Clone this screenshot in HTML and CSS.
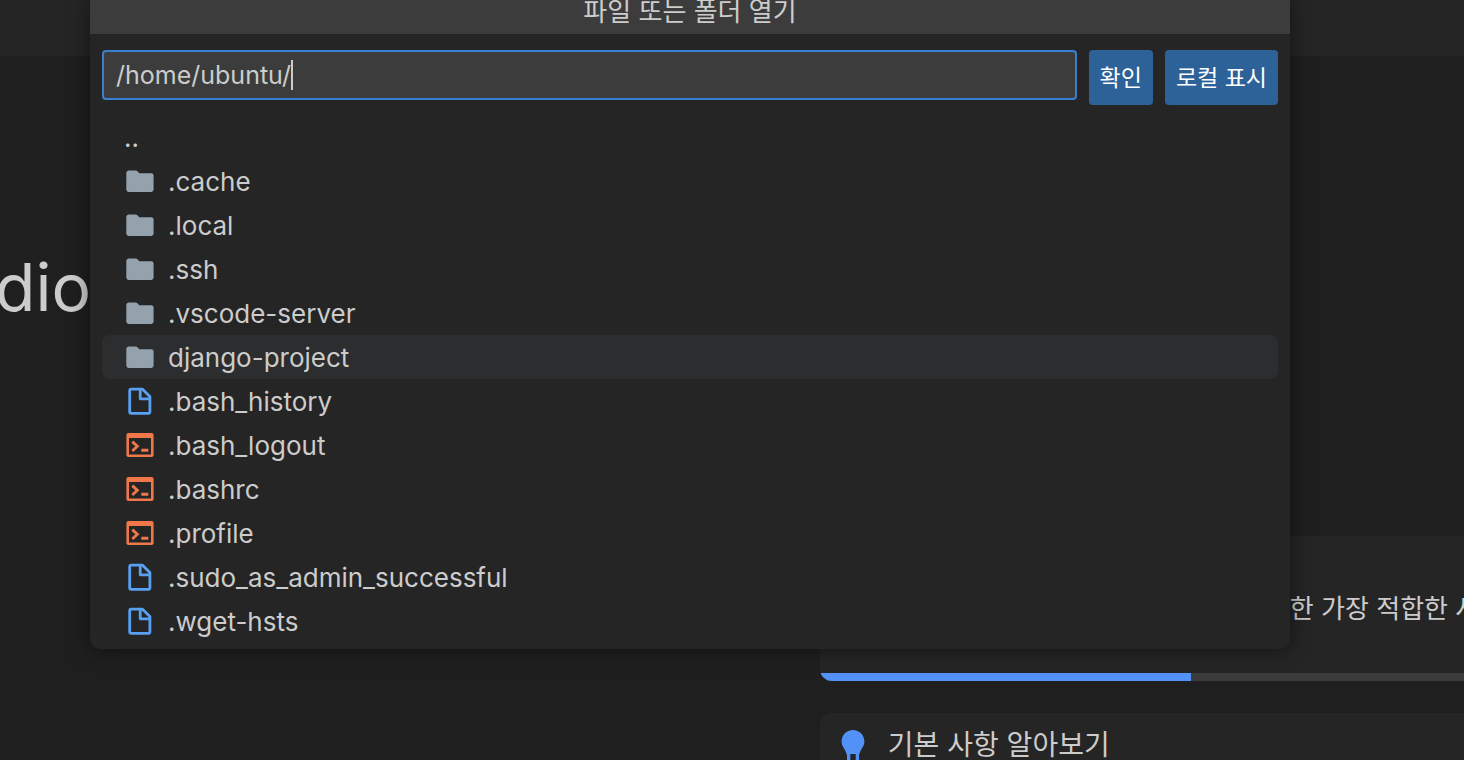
FILE: index.html
```
<!DOCTYPE html>
<html lang="ko">
<head>
    <meta charset="UTF-8">
    <meta name="viewport" content="width=device-width, initial-scale=1.0">
    <title>파일 또는 폴더 열기</title>
    <link rel="stylesheet" href="styles.css">
</head>
<body>
    <!-- Shared icons -->
    <svg class="icon-defs" width="0" height="0" aria-hidden="true">
        <symbol id="icon-folder" viewBox="0 0 32 32">
            <path fill="#94a2ae" d="M4.600 5.500h7.200c.7 0 1.200.2 1.600.7l1.900 2H27.200A2.400 2.400 0 0 1 29.600 10.600v14A2.400 2.400 0 0 1 27.200 27H4.700a2.400 2.400 0 0 1-2.400-2.400V7.900a2.400 2.400 0 0 1 2.300-2.400z"/>
        </symbol>
        <symbol id="icon-file" viewBox="0 0 32 32">
            <path fill="none" stroke="#58a1f2" stroke-width="2.800" stroke-linejoin="round" d="M7.200 4.200h11.300l7.400 7.400v15.200a1.500 1.500 0 0 1-1.500 1.500H7.200a1.500 1.500 0 0 1-1.500-1.500V5.700a1.500 1.500 0 0 1 1.500-1.500zM16.200 4.200v9.600h9.700"/>
        </symbol>
        <symbol id="icon-shell" viewBox="0 0 32 32">
            <path fill="#f0774a" fill-rule="evenodd" d="M4.400 4h23.200a2 2 0 0 1 2 2v20a2 2 0 0 1-2 2H4.400a2 2 0 0 1-2-2V6a2 2 0 0 1 2-2zM5 9v16.500h22V9z"/>
            <path fill="none" stroke="#f0774a" stroke-width="2.900" d="M8.300 12.600l5 4.700-5 4.700M17.300 21.300h7"/>
        </symbol>
    </svg>

    <div class="tab-bar"></div>
    <main class="welcome">
        <h1 class="product">dio</h1>
        <section class="walkthroughs">
            <div class="card card-setup">
                <p class="card-text">한 가장 적합한 사</p>
                <div class="progress"><div class="progress-done"></div></div>
            </div>
            <div class="card card-basics">
                <svg class="bulb" viewBox="0 0 26 40" aria-hidden="true">
                    <path fill="#5292f7" fill-rule="evenodd" d="M13 1C6.600 1 1.600 6 1.600 12.500c0 5.500 4.400 8 5.400 14V36h12v-9.500c1-6 5.400-8.500 5.400-14C24.400 6 19.400 1 13 1zM10.300 25h5.400v9h-5.400z"/>
                </svg>
                <h2 class="card-title">기본 사항 알아보기</h2>
            </div>
        </section>
    </main>

    <div class="quick-input" role="dialog" aria-labelledby="dialog-title">
        <h2 class="dialog-title" id="dialog-title">파일 또는 폴더 열기</h2>
        <form class="path-form" id="path-form">
            <div class="path-box">
                <input class="path-input" type="text" id="path" name="path" value="/home/ubuntu/" aria-label="경로" autocomplete="off" spellcheck="false">
                <span class="caret"></span>
            </div>
            <button class="btn" type="submit">확인</button>
            <button class="btn" type="button">로컬 표시</button>
        </form>
        <ul class="file-list">
            <li class="file"><span>..</span></li>
            <li class="file"><svg class="icon"><use href="#icon-folder"/></svg><span>.cache</span></li>
            <li class="file"><svg class="icon"><use href="#icon-folder"/></svg><span>.local</span></li>
            <li class="file"><svg class="icon"><use href="#icon-folder"/></svg><span>.ssh</span></li>
            <li class="file"><svg class="icon"><use href="#icon-folder"/></svg><span>.vscode-server</span></li>
            <li class="file hovered"><svg class="icon"><use href="#icon-folder"/></svg><span>django-project</span></li>
            <li class="file"><svg class="icon"><use href="#icon-file"/></svg><span>.bash_history</span></li>
            <li class="file"><svg class="icon"><use href="#icon-shell"/></svg><span>.bash_logout</span></li>
            <li class="file"><svg class="icon"><use href="#icon-shell"/></svg><span>.bashrc</span></li>
            <li class="file"><svg class="icon"><use href="#icon-shell"/></svg><span>.profile</span></li>
            <li class="file"><svg class="icon"><use href="#icon-file"/></svg><span>.sudo_as_admin_successful</span></li>
            <li class="file"><svg class="icon"><use href="#icon-file"/></svg><span>.wget-hsts</span></li>
        </ul>
    </div>

    <script>
        document.getElementById('path-form').addEventListener('submit', function(e) {
            e.preventDefault();
        });
    </script>
</body>
</html>
```
FILE: styles.css
```
* {
    box-sizing: border-box;
}
body {
    margin: 0;
    height: 100vh;
    overflow: hidden;
    display: flex;
    flex-direction: column;
    background: #1f1f1f;
    color: #cccccc;
    font-family: Inter, "Noto Sans CJK KR", sans-serif;
    font-size: 26px;
}
h1, h2, p, ul {
    margin: 0;
    padding: 0;
    font-weight: 400;
}
.icon-defs {
    position: absolute;
}

/* Welcome page */
.tab-bar {
    flex: none;
    height: 56px;
    background: #252525;
}
.welcome {
    flex: 1;
    min-height: 0;
    overflow: hidden;
    display: grid;
    grid-template-columns: 56% 1fr;
}
.product {
    margin-left: -5px;
    padding-top: 187px;
    font-size: 66px;
    line-height: 88px;
}
.walkthroughs {
    display: flex;
    flex-direction: column;
    gap: 32px;
    padding-top: 480px;
}
.card {
    flex: none;
    overflow: hidden;
    background: #252525;
    white-space: nowrap;
}
.card-setup {
    border-bottom-left-radius: 12px;
}
.card-text {
    padding: 57px 0 48px 470px;
    line-height: 32px;
}
.progress {
    height: 8px;
    background: #3c3c3c;
}
.progress-done {
    width: 371px;
    height: 8px;
    background: #5292f7;
}
.card-basics {
    display: flex;
    gap: 22px;
    padding: 16px 20px;
    border-top-left-radius: 12px;
}
.bulb {
    width: 26px;
    height: 40px;
}
.card-title {
    font-size: 28px;
    line-height: 32px;
}

/* File picker */
.quick-input {
    position: absolute;
    top: 0;
    left: 90px;
    right: 174px;
    background: #252525;
    border-radius: 0 0 10px 10px;
    box-shadow: 0 0 20px rgba(0, 0, 0, 0.5);
}
.dialog-title {
    height: 34px;
    background: #3c3c3c;
    font-size: 26px;
    line-height: 24px;
    text-align: center;
}
.path-form {
    display: flex;
    align-items: flex-start;
    gap: 12px;
    padding: 16px 12px 10px;
}
.path-box {
    position: relative;
    flex: 1;
    min-width: 0;
}
.path-input {
    display: block;
    width: 100%;
    height: 50px;
    padding: 0 12px;
    background: #3c3c3c;
    border: 2px solid #3a7fd0;
    border-radius: 4px;
    outline: none;
    caret-color: transparent;
    color: #cccccc;
    font-family: inherit;
    font-size: 25px;
}
/* Caret after the last typed character */
.caret {
    position: absolute;
    top: 10px;
    left: 189px;
    width: 2px;
    height: 30px;
    background: #cccccc;
}
.btn {
    height: 55px;
    padding: 0 11px 3px;
    background: #2d6299;
    border: none;
    border-radius: 4px;
    color: #ffffff;
    font-family: inherit;
    font-size: 23px;
    cursor: pointer;
}
.btn:hover {
    background: #26557f;
}
.file-list {
    padding: 0 12px 6px;
    list-style: none;
}
.file {
    display: flex;
    align-items: center;
    gap: 12px;
    height: 44px;
    padding: 0 22px;
    border-radius: 8px;
}
.hovered {
    background: #2b2d2e;
}
.icon {
    width: 32px;
    height: 32px;
}
```
